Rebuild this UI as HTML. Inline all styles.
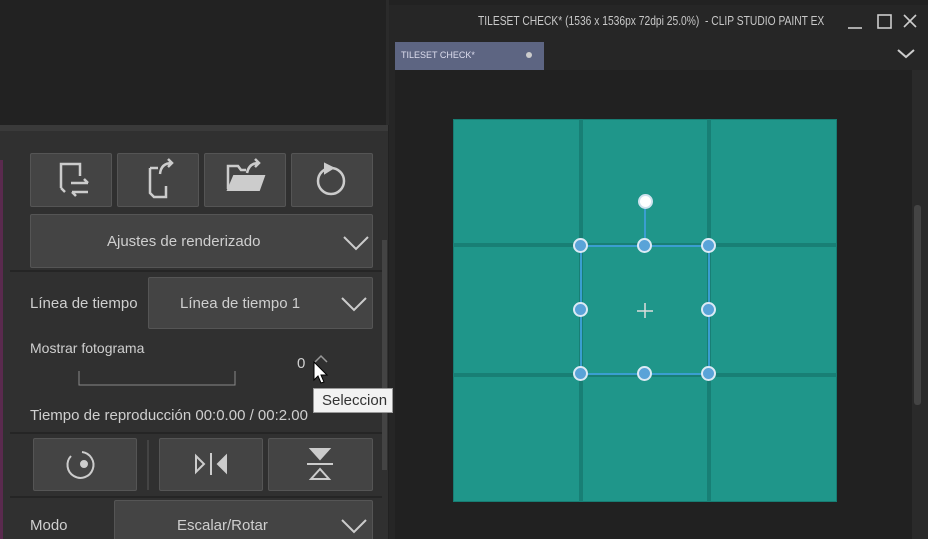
<!DOCTYPE html>
<html><head><style>
*{margin:0;padding:0;box-sizing:border-box}
html,body{width:928px;height:539px;overflow:hidden}
body{background:#222;position:relative;font-family:"Liberation Sans",sans-serif;color:#d0d0d0}
.a{position:absolute}
.btn{position:absolute;background:#444;border:1px solid #555;border-radius:2px}
.t{position:absolute;font-size:15px;color:#cfcfcf;white-space:nowrap}
.h{position:absolute;width:15px;height:15px;border-radius:50%;background:#5aa3d8;border:2px solid #dceaf5}
</style></head><body>
<div class="a" style="left:0;top:0;width:388px;height:125px;background:#222"></div>
<div class="a" style="left:386px;top:0;width:3px;height:125px;background:#2b2b2b"></div>
<div class="a" style="left:0;top:125px;width:388px;height:414px;background:#303030"></div>
<div class="a" style="left:0;top:125px;width:388px;height:6px;background:#3a3a3a"></div>
<div class="a" style="left:0;top:160px;width:3px;height:379px;background:#5a2a4e"></div>
<div class="a" style="left:382px;top:240px;width:5px;height:230px;background:#444"></div>
<div class="btn" style="left:30px;top:153px;width:82px;height:54px"></div>
<div class="btn" style="left:117px;top:153px;width:82px;height:54px"></div>
<div class="btn" style="left:204px;top:153px;width:82px;height:54px"></div>
<div class="btn" style="left:291px;top:153px;width:82px;height:54px"></div>
<div class="a" style="left:10px;top:270px;width:372px;height:2px;background:#252525"></div>
<div class="btn" style="left:30px;top:214px;width:343px;height:54px"></div>
<div class="t" style="left:107px;top:233px">Ajustes de renderizado</div>
<div class="t" style="left:30px;top:295px">Línea de tiempo</div>
<div class="btn" style="left:148px;top:277px;width:225px;height:52px"></div>
<div class="t" style="left:180px;top:295px">Línea de tiempo 1</div>
<div class="t" style="left:30px;top:340px;font-size:14px">Mostrar fotograma</div>
<div class="t" style="left:297px;top:355px">0</div>
<div class="t" style="left:30px;top:407px;font-size:15px">Tiempo de reproducción 00:0.00 / 00:2.00</div>
<div class="a" style="left:10px;top:432px;width:372px;height:2px;background:#252525"></div>
<div class="btn" style="left:33px;top:438px;width:104px;height:53px"></div>
<div class="a" style="left:147px;top:440px;width:2px;height:50px;background:#444"></div>
<div class="btn" style="left:159px;top:438px;width:104px;height:53px"></div>
<div class="btn" style="left:268px;top:438px;width:105px;height:53px"></div>
<div class="a" style="left:10px;top:496px;width:372px;height:2px;background:#252525"></div>
<div class="t" style="left:30px;top:517px">Modo</div>
<div class="btn" style="left:114px;top:500px;width:259px;height:50px"></div>
<div class="t" style="left:177px;top:517px">Escalar/Rotar</div>
<svg class="a" style="left:0;top:0;z-index:3" width="390" height="539" fill="none" stroke="#ccc" stroke-width="2">
<path d="M344 237 L356 249 L368 237"/><path d="M342 298 L354 310 L366 298"/><path d="M342 520 L354 532 L366 520"/>
<path d="M79 371 V385 H235 V371" stroke="#888" stroke-width="1"/>
<path d="M315 362 L321 356 L327 362" stroke="#999" stroke-width="1.5"/>
<path d="M71 456 A13 13 0 1 0 82 452"/><circle cx="84" cy="464" r="3" fill="#ccc"/>
<path d="M196 456 L204 464 L196 472 Z"/><path d="M211 453 V475"/><path d="M226 456 L218 464 L226 472 Z" fill="#ccc"/>
<path d="M311 449 H329 L320 459 Z" fill="#ccc"/><path d="M307 464 H333"/><path d="M320 469 L311 479 H329 Z"/>
<path d="M61 188 V164 H80 V176" stroke-width="2.5"/><path d="M61 188 L65 192" stroke-width="2.5"/>
<path d="M71 183 H88 M84 179 L88 183 M72 192 H88 M72 192 L76 196" stroke-width="2.5"/>
<path d="M150 168 H158 M150 168 V193 L154 197 H166 V186 M160 174 Q161 163 172 163 M168 159 L172 163 L168 167" stroke-width="2.5"/>
<path d="M228 189 V166 H238 L241 170 H246" stroke-width="2.5"/><path d="M228 190 H259 L264 176 H234 Z" fill="#ccc"/><path d="M247 173 Q249 163 259 163 M255 159 L259 163 L255 167" stroke-width="2.5"/>
<circle cx="331" cy="181" r="13" stroke-width="2.5"/><path d="M325 164 L333 168 L325 173 Z" fill="#ccc"/>
</svg>
<svg class="a" style="left:313px;top:361px;z-index:5" width="16" height="24"><path d="M1 1 V19 L5 15 L8 22 L11 21 L8 14 H14 Z" fill="#fff" stroke="#000"/></svg>
<div class="a" style="left:313px;top:388px;width:80px;height:25px;background:#f2f2f2;border:1px solid #999;z-index:4;font-size:15px;color:#333;padding:3px 0 0 8px;white-space:nowrap;overflow:hidden">Seleccion</div>
<div class="a" style="left:389px;top:5px;width:539px;height:534px;background:#262626"></div>
<div class="a" style="left:478px;top:13px;font-size:13px;color:#c8c8c8;white-space:nowrap;transform:scaleX(0.79);transform-origin:0 0">TILESET CHECK* (1536 x 1536px 72dpi 25.0%)&nbsp; - CLIP STUDIO PAINT EX</div>
<svg class="a" style="left:840px;top:10px" width="88" height="50" fill="none" stroke="#ccc" stroke-width="1.6">
<path d="M8 18 H22"/><rect x="38" y="5" width="13" height="13"/><path d="M64 5 L76 17 M76 5 L64 17"/><path d="M58 40 L66 47 L74 40" stroke-width="2"/>
</svg>
<div class="a" style="left:395px;top:42px;width:149px;height:28px;background:#5d6582"></div>
<div class="a" style="left:401px;top:50px;font-size:9px;color:#dde">TILESET CHECK*</div>
<div class="a" style="left:526px;top:52px;width:6px;height:6px;border-radius:50%;background:#ccc"></div>
<div class="a" style="left:395px;top:70px;width:517px;height:469px;background:#212121"></div>
<div class="a" style="left:912px;top:70px;width:16px;height:469px;background:#2a2a2a"></div>
<div class="a" style="left:914px;top:205px;width:7px;height:200px;background:#444;border-radius:3px"></div>
<div class="a" style="left:453px;top:119px;width:384px;height:383px;background:#1f968a;border:1px solid #177d73"></div>
<div class="a" style="left:453px;top:243px;width:384px;height:4px;background:#187f75"></div>
<div class="a" style="left:453px;top:373px;width:384px;height:4px;background:#187f75"></div>
<div class="a" style="left:579px;top:119px;width:4px;height:383px;background:#187f75"></div>
<div class="a" style="left:707px;top:119px;width:4px;height:383px;background:#187f75"></div>
<svg class="a" style="left:0;top:0" width="928" height="539">
<g stroke="#3a9ed0" stroke-width="2" fill="none"><rect x="581" y="246" width="128" height="128"/><path d="M645 201 V246"/></g>
<path d="M645 303 V318 M637 311 H653" stroke="#ddd" stroke-width="1.5"/>
</svg>
<div class="h" style="left:638px;top:194px;background:#fff;border-color:#cfe2ee"></div>
<div class="h" style="left:573px;top:238px"></div><div class="h" style="left:637px;top:238px"></div><div class="h" style="left:701px;top:238px"></div>
<div class="h" style="left:573px;top:302px"></div><div class="h" style="left:701px;top:302px"></div>
<div class="h" style="left:573px;top:366px"></div><div class="h" style="left:637px;top:366px"></div><div class="h" style="left:701px;top:366px"></div>
</body></html>
